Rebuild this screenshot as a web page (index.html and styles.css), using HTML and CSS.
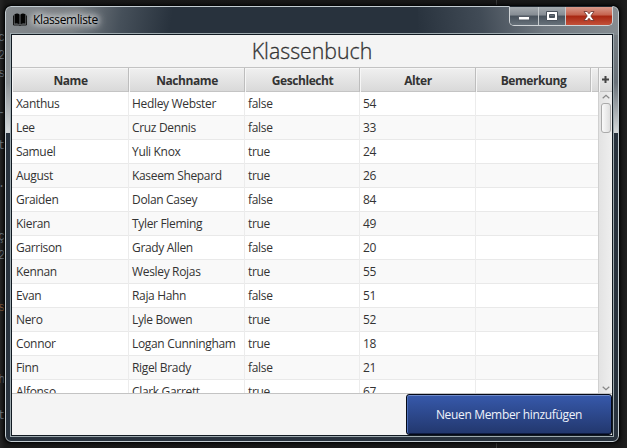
FILE: index.html
```html
<!DOCTYPE html>
<html lang="de">
<head>
<meta charset="utf-8">
<title>Klassemliste</title>
<link rel="stylesheet" href="styles.css">
</head>
<body>
<div class="code" aria-hidden="true">
<span style="top:30px">c</span><span style="top:48px">2</span><span style="top:66px">s</span><span style="top:105px">-</span><span style="top:138px">t</span><span style="top:176px">.</span><span style="top:229px">ç</span><span style="top:248px">2</span><span class="warm" style="top:300px">s</span><span style="top:372px">h</span><span style="top:408px">t</span>
</div>
<div class="guide guide-top"></div>
<div class="guide guide-bottom"></div>
<div class="window">
  <header class="titlebar">
    <svg class="book" width="14" height="13" viewBox="0 0 14 13"><path d="M1.5 1.2Q4.500-.3 6.600 1.500V11.500Q4.500 10 1.500 10.800ZM7.400 1.500Q9.500-.3 12.500 1.200V10.800Q9.500 10 7.400 11.500Z" fill="#040404"/><path d="M.5 2.500V12H6L7 12.500 8 12H13.500V2.500" fill="none" stroke="#151515"/></svg>
    <span class="caption">Klassemliste</span>
    <div class="controls">
      <div class="ctl min"><svg width="12" height="12"><rect x=".5" y="6.5" width="11" height="3.5" fill="#fff" stroke="#555c66"/></svg></div>
      <div class="ctl max"><svg width="12" height="10"><path d="M.5 .5h11v9h-11zM3.500 3.500v3h5v-3z" fill="#fff" stroke="#4a525c" fill-rule="evenodd"/></svg></div>
      <div class="ctl close"><svg width="12" height="12" viewBox="0 0 12 12"><path d="M1 1.5H4.2L6 3.8 7.8 1.5H11L7.8 6 11 10.5H7.8L6 8.2 4.2 10.5H1L4.2 6Z" fill="#fff" stroke="#6b3029" stroke-width=".8"/></svg></div>
    </div>
  </header>
  <main class="client">
    <h1>Klassenbuch</h1>
    <section class="table">
      <div class="head">
        <div>Name</div><div>Nachname</div><div>Geschlecht</div><div>Alter</div><div>Bemerkung</div><div></div>
        <div class="plus"><svg width="7" height="7"><path d="M3.5 0V7M0 3.5H7" stroke="#444" stroke-width="2"/></svg></div>
      </div>
      <div class="body">
        <div class="rows">
          <div class="row"><div>Xanthus</div><div>Hedley Webster</div><div>false</div><div>54</div><div></div></div>
          <div class="row"><div>Lee</div><div>Cruz Dennis</div><div>false</div><div>33</div><div></div></div>
          <div class="row"><div>Samuel</div><div>Yuli Knox</div><div>true</div><div>24</div><div></div></div>
          <div class="row"><div>August</div><div>Kaseem Shepard</div><div>true</div><div>26</div><div></div></div>
          <div class="row"><div>Graiden</div><div>Dolan Casey</div><div>false</div><div>84</div><div></div></div>
          <div class="row"><div>Kieran</div><div>Tyler Fleming</div><div>true</div><div>49</div><div></div></div>
          <div class="row"><div>Garrison</div><div>Grady Allen</div><div>false</div><div>20</div><div></div></div>
          <div class="row"><div>Kennan</div><div>Wesley Rojas</div><div>true</div><div>55</div><div></div></div>
          <div class="row"><div>Evan</div><div>Raja Hahn</div><div>false</div><div>51</div><div></div></div>
          <div class="row"><div>Nero</div><div>Lyle Bowen</div><div>true</div><div>52</div><div></div></div>
          <div class="row"><div>Connor</div><div>Logan Cunningham</div><div>true</div><div>18</div><div></div></div>
          <div class="row"><div>Finn</div><div>Rigel Brady</div><div>false</div><div>21</div><div></div></div>
          <div class="row"><div>Alfonso</div><div>Clark Garrett</div><div>true</div><div>67</div><div></div></div>
        </div>
        <div class="scroll">
          <svg width="8" height="5"><path d="M.7 4.3 4 1.2 7.3 4.3" fill="none" stroke="#888" stroke-width="1.2"/></svg>
          <div class="thumb"></div>
          <svg class="down" width="8" height="5"><path d="M.7.7 4 3.8 7.3.7" fill="none" stroke="#888" stroke-width="1.2"/></svg>
        </div>
      </div>
    </section>
    <footer><button>Neuen Member hinzufügen</button></footer>
  </main>
</div>
</body>
</html>
```
FILE: styles.css
```css
* { box-sizing: border-box; }
body {
  margin: 0;
  width: 627px;
  height: 448px;
  padding: 6px 0 0 5px;
  overflow: hidden;
  position: relative;
  background: linear-gradient(90deg, #242424, #1a1a1a 5px, #181818 619px, #1f1f1f);
  font: 12px "Open Sans", "Noto Sans", sans-serif;
  color: #333;
}
.code span {
  position: absolute;
  left: -2px;
  font: 12px/16px "Liberation Mono", monospace;
  color: #70787e;
}
.code .warm { color: #8a5c3c; }
.guide { position: absolute; left: 496px; width: 1px; background: #3c3c3c; }
.guide-top { top: 0; height: 5px; }
.guide-bottom { top: 443px; height: 5px; }
.window {
  position: relative;
  width: 614px;
  height: 436px;
  display: flex;
  flex-direction: column;
  padding: 0 5px 5px;
  border: 1px solid #c3ccd1;
  border-radius: 6px;
  outline: 1px solid #050607;
  box-shadow: 0 0 4px 1px #000;
  background:
    linear-gradient(100deg, #858a8e 0, #777d82 70px, #46505a 115px, #28323d 165px, transparent 210px) 0 0 / 240px 28px no-repeat,
    linear-gradient(80deg, transparent 0, #414b56 65px, #707880 125px, #858c91 200px) 100% 0 / 200px 28px no-repeat,
    linear-gradient(#80868a, #8d9295 60%, #d1d5d7 98%) 0 0 / 5px 126px no-repeat,
    linear-gradient(#80868a, #687078 60%, #d1d5d7 98%) 100% 0 / 6px 126px no-repeat,
    #28323d;
}
.titlebar { height: 26px; flex: none; display: flex; align-items: flex-start; padding: 0 0 0 2px; }
.book { margin: 6px 6px 0 0; }
.caption {
  margin-top: 4px;
  line-height: 18px;
  letter-spacing: -.35px;
  color: #000;
  text-shadow: 0 0 6px #fff, 0 0 8px #fff, 0 0 11px #ddd;
}
.controls {
  display: flex;
  margin: -1px 0 0 auto;
  width: 104px;
  height: 20px;
  border: 1px solid #d0d4d7;
  border-top-color: #202830;
  border-radius: 0 0 5px 5px;
  overflow: hidden;
}
.ctl {
  display: flex;
  align-items: center;
  justify-content: center;
  background: linear-gradient(#a5abb0, #858c93 45%, #48525c 50%, #67717a);
}
.min { width: 28px; }
.max { width: 28px; border: solid #c5cacd; border-width: 0 1px; }
.close { flex: 1; background: linear-gradient(#d99a8b, #c5614d 45%, #a82611 50%, #c3513a); }
.client {
  flex: 1;
  min-height: 0;
  border: 1px solid #111a22;
  outline: 1px solid #9eaaaf;
  display: flex;
  flex-direction: column;
  margin: 1px 0 0;
  background: #f4f4f4;
}
h1 {
  margin: 0;
  height: 32px;
  flex: none;
  text-align: center;
  font: 300 21.3px/32px "Open Sans", "Noto Sans", sans-serif;
  color: #333;
  -webkit-text-stroke: .3px #333;
}
.table { height: 327px; border: solid #c3c3c3; border-width: 1px 0; display: flex; flex-direction: column; overflow: hidden; }
.head {
  display: grid;
  grid-template-columns: 117px 116px 115px 116px 115px 8px 1fr;
  flex: none;
  height: 24px;
  border-bottom: 1px solid #c4c4c4;
  background: linear-gradient(#f0f0f0, #d9d9d9);
  font-weight: 700;
  line-height: 26px;
  text-align: center;
  letter-spacing: -.42px;
}
.head > div { padding-left: 1px; border-right: 1px solid #bdbdbd; box-shadow: inset 1px 1px #f6f6f6; }
.head .plus { border: 0; display: flex; align-items: flex-start; justify-content: center; padding: 8px 0 0; }
.body { flex: 1; min-height: 0; display: flex; }
.rows { flex: 1; overflow: hidden; }
.row {
  height: 24px;
  display: grid;
  grid-template-columns: 117px 116px 115px 116px 1fr;
  line-height: 24px;
  letter-spacing: -.33px;
  background: #fff;
  border-bottom: 1px solid #e9e9e9;
}
.row:nth-child(even) { background: #f9f9f9; }
.row > div { padding-left: 4px; border-right: 1px solid #ececec; white-space: nowrap; }
.row > div + div { padding-left: 3px; }
.row > div:last-child { border: 0; }
.scroll {
  width: 14px;
  display: flex;
  flex-direction: column;
  align-items: center;
  padding: 2px 0;
  border-left: 1px solid #d0d0d0;
  background: linear-gradient(90deg, #e3e3e3, #efefef);
}
.thumb {
  width: 10px;
  height: 30px;
  margin-top: 4px;
  border: 1px solid #aaa;
  border-radius: 3px;
  background: linear-gradient(90deg, #fafafa, #dfdfdf);
}
.down { margin-top: auto; }
footer { flex: 1; display: flex; justify-content: flex-end; }
button {
  width: 206px;
  height: 41px;
  padding: 0;
  border: 1px solid #050a18;
  border-radius: 3px;
  background: linear-gradient(#3759ab, #22376d);
  box-shadow: inset 0 1px #6e8ac8, inset 1px 0 #4d6fb8, inset 0 -1px #101d42;
  color: #eef2fb;
  font: 12px "Open Sans", "Noto Sans", sans-serif;
  letter-spacing: -.33px;
}
```
